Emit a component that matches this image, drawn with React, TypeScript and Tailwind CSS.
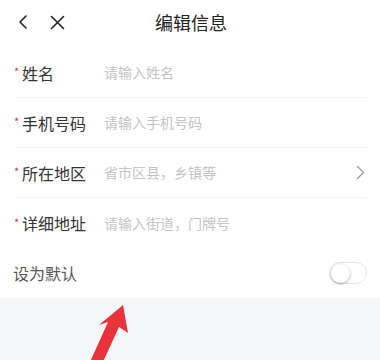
import React from 'react';

const fields = [
  { label: '姓名', placeholder: '请输入姓名' },
  { label: '手机号码', placeholder: '请输入手机号码' },
  { label: '所在地区', placeholder: '省市区县，乡镇等', arrow: true },
  { label: '详细地址', placeholder: '请输入街道，门牌号' },
];

const App: React.FC = () => {
  return (
    <div
      className="w-[380px] h-[360px] overflow-hidden bg-[#f5f6f8] relative"
      style={{ fontFamily: '"Noto Sans CJK SC", "Noto Sans", sans-serif' }}
    >
      <div className="bg-white">
        {/* Header */}
        <div className="h-[48px] flex items-center relative px-[18px] pb-[4px]">
          <svg width="10" height="16" viewBox="0 0 10 16" fill="none" stroke="#222" strokeWidth="1.6" strokeLinecap="round" strokeLinejoin="round">
            <path d="M8 2 2 8l6 6" />
          </svg>
          <svg className="ml-[22px]" width="15" height="15" viewBox="0 0 15 15" fill="none" stroke="#222" strokeWidth="1.6" strokeLinecap="round">
            <path d="M1.5 1.5l12 12M13.5 1.5l-12 12" />
          </svg>
          <div className="absolute left-0 right-0 text-center text-[18px] text-[#222] pointer-events-none leading-none pl-[2px]">
            编辑信息
          </div>
        </div>

        {/* Form rows */}
        {fields.map((f, i) => (
          <div
            key={f.label}
            className={`mx-[14px] h-[50px] flex items-center ${i < fields.length - 1 ? 'border-b border-[#f3f3f3]' : ''}`}
          >
            <div className="w-[90px] flex items-center text-[16px] text-[#333]">
              <span className="w-[8px] text-[#d9304f] text-[11px] -mt-[2px]">*</span>
              {f.label}
            </div>
            <div className="flex-1 text-[14px] text-[#c4c4c4]">{f.placeholder}</div>
            {f.arrow && (
              <svg className="mr-[1px]" width="9" height="15" viewBox="0 0 9 15" fill="none" stroke="#999" strokeWidth="1.3" strokeLinecap="round" strokeLinejoin="round">
                <path d="M1.5 1.5 7.5 7.5l-6 6" />
              </svg>
            )}
          </div>
        ))}

        {/* Default toggle */}
        <div className="mx-[13px] h-[50px] flex items-center justify-between">
          <span className="text-[16px] text-[#555]">设为默认</span>
          <div className="w-[38px] h-[22px] rounded-full border border-[#e6e6e6] bg-white flex items-center px-[1px]">
            <div className="w-[19px] h-[19px] rounded-full bg-white shadow-[0_1px_3px_rgba(0,0,0,0.35)]" />
          </div>
        </div>
      </div>

      {/* Red arrow annotation */}
      <svg className="absolute left-0 top-0" width="380" height="360" viewBox="0 0 380 360">
        <path d="M90 362 L108 322 L99 325 L123 305 L128 333 L119 327 L101 366 Z" fill="#e8323c" />
      </svg>
    </div>
  );
};

export default App;
